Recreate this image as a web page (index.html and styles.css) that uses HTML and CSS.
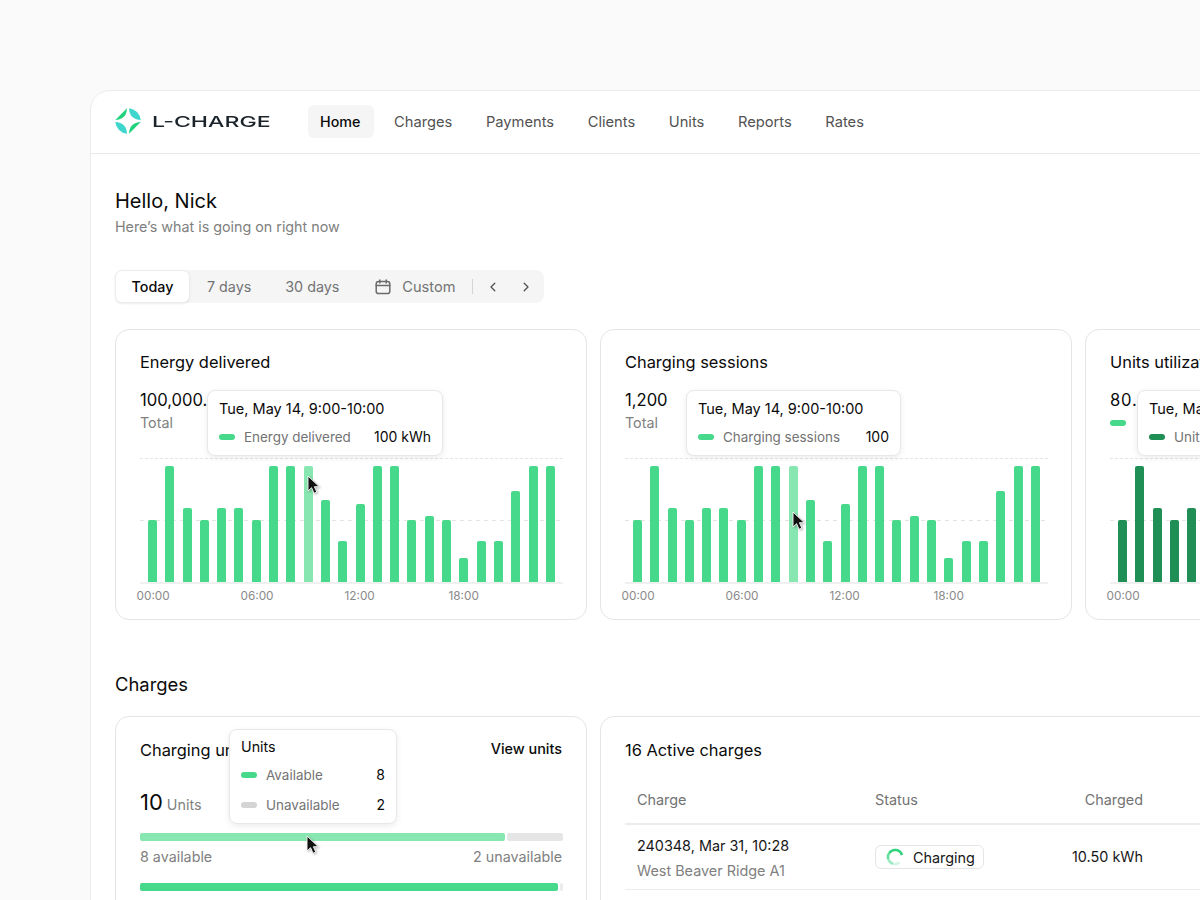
FILE: index.html
```html
<!DOCTYPE html>
<html lang="en">
<head>
<meta charset="utf-8">
<title>L-Charge</title>
<link rel="stylesheet" href="styles.css">
</head>
<body>
<div class="frame">
  <header class="topbar">
    <div class="brand">
      <svg class="logo" viewBox="0 0 26 26" width="26" height="26" aria-hidden="true">
        <path fill="#1fd37c" d="M12 .3 .3 12Q11.500 11.500 12 .3Z"/>
        <path fill="#3fd6cd" d="M14 .3A12.900 12.900 0 0 1 25.700 12Q14.500 11.500 14 .3Z"/>
        <path fill="#3fd6cd" d="M12 25.700A12.900 12.900 0 0 1 .3 14Q11.500 14.500 12 25.700Z"/>
        <path fill="#1fd37c" d="M14 25.700 25.700 14Q14.500 14.500 14 25.700Z"/>
      </svg>
      <span class="wordmark">L-CHARGE</span>
    </div>
    <nav class="nav">
      <a class="nav-item is-active">Home</a>
      <a class="nav-item">Charges</a>
      <a class="nav-item">Payments</a>
      <a class="nav-item">Clients</a>
      <a class="nav-item">Units</a>
      <a class="nav-item">Reports</a>
      <a class="nav-item">Rates</a>
    </nav>
  </header>

  <main class="content">
    <h1 class="hello">Hello, Nick</h1>
    <p class="sub">Here’s what is going on right now</p>

    <div class="segment">
      <span class="seg seg-on">Today</span>
      <span class="seg seg-7">7 days</span>
      <span class="seg seg-30">30 days</span>
      <span class="seg seg-custom">
        <svg viewBox="0 0 16 16" width="16" height="16" fill="none" stroke="#6b6b6b" stroke-width="1.500" stroke-linecap="round" aria-hidden="true"><rect x="1.200" y="2.600" width="13.600" height="12" rx="2.400"/><path d="M1.200 6.400h13.600M4.800 .9v3M11.200 .9v3"/></svg>
        Custom
      </span>
      <span class="seg-sep"></span>
      <svg class="chev" viewBox="0 0 12 12" width="12" height="12" fill="none" stroke="#525252" stroke-width="1.300" stroke-linecap="round" stroke-linejoin="round" aria-hidden="true"><path d="M7.800 2.200 4 6l3.800 3.800"/></svg>
      <svg class="chev chev-next" viewBox="0 0 12 12" width="12" height="12" fill="none" stroke="#525252" stroke-width="1.300" stroke-linecap="round" stroke-linejoin="round" aria-hidden="true"><path d="M4.200 2.200 8 6 4.200 9.800"/></svg>
    </div>

    <section class="cards">
      <article class="card chart-card">
        <h2 class="card-title">Energy delivered</h2>
        <div class="big">100,000.5 kWh</div>
        <div class="muted">Total</div>
        <div class="plot">
          <div class="bars">
            <i style="height:62px"></i><i style="height:116px"></i><i style="height:74px"></i><i style="height:62px"></i><i style="height:74px"></i><i style="height:74px"></i><i style="height:62px"></i><i style="height:116px"></i><i style="height:116px"></i><i class="hot" style="height:116px"></i><i style="height:82px"></i><i style="height:41px"></i><i style="height:78px"></i><i style="height:116px"></i><i style="height:116px"></i><i style="height:62px"></i><i style="height:66px"></i><i style="height:62px"></i><i style="height:24px"></i><i style="height:41px"></i><i style="height:41px"></i><i style="height:91px"></i><i style="height:116px"></i><i style="height:116px"></i>
          </div>
        </div>
        <div class="ticks"><span>00:00</span><span>06:00</span><span>12:00</span><span>18:00</span></div>
        <div class="tip tip-a">
          <div class="tip-head">Tue, May 14, 9:00-10:00</div>
          <div class="tip-row"><b class="chip"></b><span class="tip-label">Energy delivered</span><span class="tip-val">100 kWh</span></div>
        </div>
        <svg class="cursor cursor-a" viewBox="0 0 14 20" width="14" height="20" aria-hidden="true"><path d="M1 1v15l3.600-3.300 2.400 5.600 2.800-1.200-2.400-5.400h4.900Z" fill="#111" stroke="#fff" stroke-width=".9"/></svg>
      </article>

      <article class="card chart-card">
        <h2 class="card-title">Charging sessions</h2>
        <div class="big">1,200</div>
        <div class="muted">Total</div>
        <div class="plot">
          <div class="bars">
            <i style="height:62px"></i><i style="height:116px"></i><i style="height:74px"></i><i style="height:62px"></i><i style="height:74px"></i><i style="height:74px"></i><i style="height:62px"></i><i style="height:116px"></i><i style="height:116px"></i><i class="hot" style="height:116px"></i><i style="height:82px"></i><i style="height:41px"></i><i style="height:78px"></i><i style="height:116px"></i><i style="height:116px"></i><i style="height:62px"></i><i style="height:66px"></i><i style="height:62px"></i><i style="height:24px"></i><i style="height:41px"></i><i style="height:41px"></i><i style="height:91px"></i><i style="height:116px"></i><i style="height:116px"></i>
          </div>
        </div>
        <div class="ticks"><span>00:00</span><span>06:00</span><span>12:00</span><span>18:00</span></div>
        <div class="tip tip-b">
          <div class="tip-head">Tue, May 14, 9:00-10:00</div>
          <div class="tip-row"><b class="chip"></b><span class="tip-label">Charging sessions</span><span class="tip-val">100</span></div>
        </div>
        <svg class="cursor cursor-b" viewBox="0 0 14 20" width="14" height="20" aria-hidden="true"><path d="M1 1v15l3.600-3.300 2.400 5.600 2.800-1.200-2.400-5.400h4.900Z" fill="#111" stroke="#fff" stroke-width=".9"/></svg>
      </article>

      <article class="card chart-card">
        <h2 class="card-title">Units utilization</h2>
        <div class="big big-wide">80.5%</div>
        <b class="chip chip-solo"></b>
        <div class="plot">
          <div class="bars bars-dark">
            <i style="height:62px"></i><i style="height:116px"></i><i style="height:74px"></i><i style="height:62px"></i><i style="height:74px"></i><i style="height:74px"></i><i style="height:62px"></i><i style="height:116px"></i><i style="height:116px"></i><i class="hot" style="height:116px"></i><i style="height:82px"></i><i style="height:41px"></i><i style="height:78px"></i><i style="height:116px"></i><i style="height:116px"></i><i style="height:62px"></i><i style="height:66px"></i><i style="height:62px"></i><i style="height:24px"></i><i style="height:41px"></i><i style="height:41px"></i><i style="height:91px"></i><i style="height:116px"></i><i style="height:116px"></i>
          </div>
        </div>
        <div class="ticks"><span>00:00</span><span>06:00</span><span>12:00</span><span>18:00</span></div>
        <div class="tip tip-c">
          <div class="tip-head">Tue, May 14, 9:00-10:00</div>
          <div class="tip-row"><b class="chip chip-dark"></b><span class="tip-label">Units utilization</span><span class="tip-val">80%</span></div>
        </div>
      </article>
    </section>

    <h2 class="section-title">Charges</h2>

    <section class="lower">
      <article class="card units-card">
        <div class="units-head">
          <h2 class="card-title">Charging units</h2>
          <a class="link">View units</a>
        </div>
        <div class="units-total"><span class="units-num">10</span> <span class="muted">Units</span></div>
        <div class="meter"><span class="m-on m-light" style="width:365px"></span><span class="m-off"></span></div>
        <div class="meter-labels"><span>8 available</span><span>2 unavailable</span></div>
        <div class="meter meter-2"><span class="m-on" style="width:418px"></span><span class="m-off"></span></div>
        <div class="tip tip-d">
          <div class="tip-title">Units</div>
          <div class="tip-row"><b class="chip"></b><span class="tip-label">Available</span><span class="tip-val">8</span></div>
          <div class="tip-row tip-row-2"><b class="chip chip-grey"></b><span class="tip-label">Unavailable</span><span class="tip-val">2</span></div>
        </div>
        <svg class="cursor cursor-d" viewBox="0 0 14 20" width="14" height="20" aria-hidden="true"><path d="M1 1v15l3.600-3.300 2.400 5.600 2.800-1.200-2.400-5.400h4.900Z" fill="#111" stroke="#fff" stroke-width=".9"/></svg>
      </article>

      <article class="card table-card">
        <h2 class="card-title">16 Active charges</h2>
        <div class="t-row t-head">
          <span class="c-charge">Charge</span><span class="c-status">Status</span><span class="c-num">Charged</span>
        </div>
        <div class="t-row t-body">
          <div class="c-charge c-stack">
            <div class="t-main">240348, Mar 31, 10:28</div>
            <div class="t-sub">West Beaver Ridge A1</div>
          </div>
          <div class="c-status">
            <span class="status">
              <svg viewBox="0 0 18 18" width="18" height="18" fill="none" stroke-width="2.600" aria-hidden="true">
                <path d="M15.900 7.200A7.100 7.100 0 0 0 3.300 4.900" stroke="#2fd27c"/>
                <path d="M3.300 4.900A7.100 7.100 0 0 0 2.300 11.200" stroke="#63df9b"/>
                <path d="M2.300 11.200A7.100 7.100 0 0 0 7 15.800" stroke="#9be9bf"/>
                <path d="M7 15.800A7.100 7.100 0 0 0 13.500 14.500" stroke="#d2f5e2"/>
              </svg>
              Charging
            </span>
          </div>
          <div class="c-num t-main">10.50 kWh</div>
        </div>
      </article>
    </section>
  </main>
</div>
</body>
</html>
```

FILE: styles.css
```css
* { box-sizing: border-box; }
html, body { height: 900px; overflow: hidden; }
body {
  margin: 0;
  background: #fafafa;
  color: #0a0a0a;
  font-family: Inter, "Liberation Sans", sans-serif;
  font-size: 14.300px;
}
.frame {
  width: 1320px;
  height: 1000px;
  margin: 90px 0 0 90px;
  background: #fff;
  border: 1px solid #ececec;
  border-radius: 20px 0 0 0;
}
.topbar {
  display: flex;
  align-items: center;
  height: 63px;
  padding: 0 24px 2px;
  border-bottom: 1px solid #e8e8e8;
}
.brand { display: flex; align-items: center; width: 193px; }
.logo { flex: none; }
.wordmark {
  margin-left: 11px;
  font-size: 15px;
  font-weight: 500;
  color: #1b232b;
  transform: scaleX(1.540);
  transform-origin: left center;
}
.nav { display: flex; gap: 9.600px; font-size: 14.700px; }
.nav-item {
  padding: 0 12px;
  height: 33px;
  line-height: 34px;
  border-radius: 6px;
  color: #525252;
}
.nav-item.is-active {
  width: 66px;
  margin-right: -1.600px;
  background: #f5f5f5;
  color: #0a0a0a;
  font-size: 14.300px;
  font-weight: 500;
  line-height: 33px;
}
.content { padding: 35px 24px 0; }
.hello { margin: 0; font-size: 20px; line-height: 24px; font-weight: 400; }
.sub { margin: 3px 0 0; line-height: 22px; color: #808080; }
.segment {
  display: flex;
  align-items: center;
  width: 429px;
  height: 33px;
  margin-top: 32px;
  background: #f5f5f5;
  border-radius: 8px;
  color: #737373;
}
.seg { display: flex; align-items: center; gap: 11px; }
.seg-on {
  width: 75px;
  height: 33px;
  justify-content: center;
  background: #fff;
  border: 1px solid #ececec;
  border-radius: 7px;
  box-shadow: 0 1px 2px rgba(0,0,0,.08);
  color: #0a0a0a;
  font-weight: 500;
}
.seg-7 { margin-left: 17px; }
.seg-30 { margin-left: 34px; }
.seg-custom { margin-left: 36px; font-size: 14.600px; }
.seg-sep { width: 1px; height: 15px; margin-left: 17px; background: #d4d4d4; }
.chev { margin-left: 14px; }
.chev-next { margin-left: 21px; }

.cards { display: flex; gap: 13px; margin-top: 26px; }
.card {
  position: relative;
  flex: none;
  width: 472px;
  background: #fff;
  border: 1px solid #e5e5e5;
  border-radius: 14px;
  padding: 22px 24px 24px;
}
.chart-card { height: 291px; }
.card-title { margin: 0; font-size: 16.400px; line-height: 20px; font-weight: 400; }
.big { margin-top: 16px; font-size: 16.600px; line-height: 24px; white-space: nowrap; }
.big-wide { letter-spacing: .8px; }
.muted { color: #808080; line-height: 22px; }
.chip-solo { margin-top: 8px; margin-bottom: 9px; }
.plot {
  position: absolute;
  left: 24px;
  top: 128px;
  width: 423px;
  height: 126px;
  border-top: 1px dashed #e5e5e5;
  border-bottom: 2px solid #f0f0f0;
  background: repeating-linear-gradient(90deg, #e5e5e5 0 4px, transparent 4px 8px) 0 61px / 100% 1px no-repeat;
}
.bars {
  display: flex;
  align-items: flex-end;
  justify-content: space-between;
  height: 123px;
  padding: 0 8px;
}
.bars i { width: 9px; background: #47d98b; border-radius: 2px 2px 0 0; }
.bars .hot { background: #88e6b0; }
.bars-dark i, .bars-dark .hot { background: #1f8f55; }
.ticks {
  position: absolute;
  left: 12.500px;
  top: 258px;
  display: flex;
  color: #8a8a8a;
  font-size: 11.800px;
  line-height: 16px;
}
.ticks span { flex: none; width: 104px; padding-left: 8px; }

.tip {
  position: absolute;
  background: #fff;
  border: 1px solid #e8e8e8;
  border-radius: 8px;
  box-shadow: 0 2px 6px rgba(0,0,0,.08);
  padding: 9px 11px;
  white-space: nowrap;
}
.tip-a { left: 91px; top: 60px; width: 236px; height: 66px; }
.tip-b { left: 85px; top: 60px; width: 215px; height: 66px; }
.tip-c { left: 51px; top: 60px; width: 237px; height: 66px; }
.tip-d { left: 113px; top: 12px; width: 168px; height: 95px; padding-top: 8px; }
.tip-head { line-height: 18px; font-size: 14.500px; }
.tip-title { line-height: 18px; }
.tip-row { display: flex; align-items: center; margin-top: 10px; line-height: 18px; }
.tip-d .tip-row { margin-top: 10px; }
.tip-d .tip-row-2 { margin-top: 12px; }
.tip-label { color: #737373; margin-left: 9px; flex: 1; font-size: 13.450px; }
.tip-val { color: #0a0a0a; font-size: 14px; }
.chip { display: block; flex: none; width: 16px; height: 6px; border-radius: 3px; background: #47d98b; }
.chip-dark { background: #1f8f55; }
.chip-grey { background: #d4d4d4; }

.cursor { position: absolute; filter: drop-shadow(1px 1px 1px rgba(0,0,0,.3)); z-index: 3; }
.cursor-a { left: 191px; top: 145px; }
.cursor-b { left: 191px; top: 181px; }
.cursor-d { left: 190px; top: 118px; }

.section-title { margin: 52px 0 0; font-size: 18.400px; line-height: 24px; font-weight: 400; }
.lower { display: flex; gap: 13px; margin-top: 20px; }
.lower .card { height: 260px; padding-top: 23px; }
.units-head { display: flex; justify-content: space-between; align-items: center; }
.link { font-size: 14.400px; font-weight: 500; line-height: 16px; margin-bottom: 2px; }
.units-total { margin-top: 29px; line-height: 26px; }
.units-num { font-size: 22px; }
.meter { display: flex; gap: 2px; height: 8px; margin-top: 15px; width: 423px; }
.m-on { background: #47d98b; border-radius: 2px; }
.m-light { background: #88e6b0; }
.m-off { flex: 1; background: #e5e5e5; border-radius: 2px; }
.meter-labels { display: flex; justify-content: space-between; margin-top: 7px; color: #808080; line-height: 18px; }
.meter-2 { margin-top: 17px; }
.meter-2 .m-off { background: #ececec; }

.table-card { width: 700px; font-size: 14.400px; }
.t-row { display: grid; grid-template-columns: 250px 150px 118px; align-items: center; width: 640px; border-bottom: 1px solid #ececec; }
.t-head { margin-top: 16px; height: 49px; color: #737373; border-bottom-width: 2px; }
.t-body { height: 65px; }
.c-charge { padding-left: 12px; }
.c-stack { padding-top: 3px; }
.c-num { text-align: right; }
.t-main { line-height: 20px; color: #171717; }
.t-sub { margin-top: 5px; line-height: 20px; color: #808080; }
.status {
  display: inline-flex;
  align-items: center;
  gap: 9px;
  height: 24px;
  padding: 0 8px 0 10px;
  border: 1px solid #e5e5e5;
  border-radius: 6px;
  color: #171717;
}
```
